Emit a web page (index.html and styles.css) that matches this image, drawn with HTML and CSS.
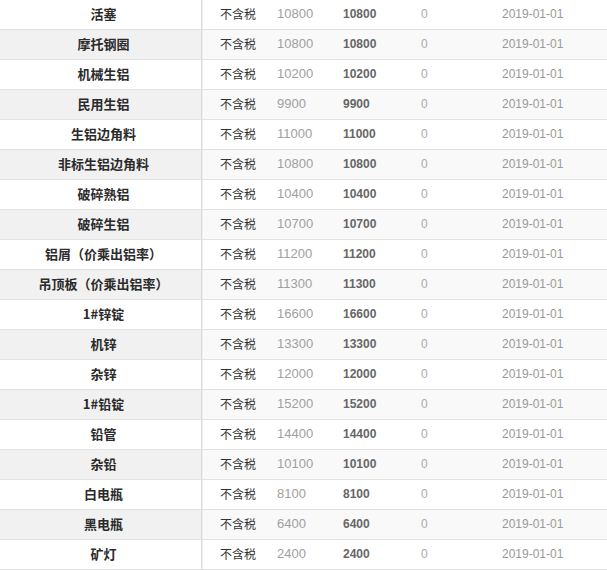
FILE: index.html
```html
<!DOCTYPE html>
<html lang="zh">
<head>
<meta charset="utf-8">
<link rel="stylesheet" href="styles.css">
</head>
<body>
<div class="table">
  <div class="row"><div class="name">活塞</div><div class="tax">不含税</div><div class="old">10800</div><div class="new">10800</div><div class="chg">0</div><div class="date">2019-01-01</div></div>
  <div class="row"><div class="name">摩托钢圈</div><div class="tax">不含税</div><div class="old">10800</div><div class="new">10800</div><div class="chg">0</div><div class="date">2019-01-01</div></div>
  <div class="row"><div class="name">机械生铝</div><div class="tax">不含税</div><div class="old">10200</div><div class="new">10200</div><div class="chg">0</div><div class="date">2019-01-01</div></div>
  <div class="row"><div class="name">民用生铝</div><div class="tax">不含税</div><div class="old">9900</div><div class="new">9900</div><div class="chg">0</div><div class="date">2019-01-01</div></div>
  <div class="row"><div class="name">生铝边角料</div><div class="tax">不含税</div><div class="old">11000</div><div class="new">11000</div><div class="chg">0</div><div class="date">2019-01-01</div></div>
  <div class="row"><div class="name">非标生铝边角料</div><div class="tax">不含税</div><div class="old">10800</div><div class="new">10800</div><div class="chg">0</div><div class="date">2019-01-01</div></div>
  <div class="row"><div class="name">破碎熟铝</div><div class="tax">不含税</div><div class="old">10400</div><div class="new">10400</div><div class="chg">0</div><div class="date">2019-01-01</div></div>
  <div class="row"><div class="name">破碎生铝</div><div class="tax">不含税</div><div class="old">10700</div><div class="new">10700</div><div class="chg">0</div><div class="date">2019-01-01</div></div>
  <div class="row"><div class="name">铝屑（价乘出铝率）</div><div class="tax">不含税</div><div class="old">11200</div><div class="new">11200</div><div class="chg">0</div><div class="date">2019-01-01</div></div>
  <div class="row"><div class="name">吊顶板（价乘出铝率）</div><div class="tax">不含税</div><div class="old">11300</div><div class="new">11300</div><div class="chg">0</div><div class="date">2019-01-01</div></div>
  <div class="row"><div class="name">1#锌锭</div><div class="tax">不含税</div><div class="old">16600</div><div class="new">16600</div><div class="chg">0</div><div class="date">2019-01-01</div></div>
  <div class="row"><div class="name">机锌</div><div class="tax">不含税</div><div class="old">13300</div><div class="new">13300</div><div class="chg">0</div><div class="date">2019-01-01</div></div>
  <div class="row"><div class="name">杂锌</div><div class="tax">不含税</div><div class="old">12000</div><div class="new">12000</div><div class="chg">0</div><div class="date">2019-01-01</div></div>
  <div class="row"><div class="name">1#铅锭</div><div class="tax">不含税</div><div class="old">15200</div><div class="new">15200</div><div class="chg">0</div><div class="date">2019-01-01</div></div>
  <div class="row"><div class="name">铅管</div><div class="tax">不含税</div><div class="old">14400</div><div class="new">14400</div><div class="chg">0</div><div class="date">2019-01-01</div></div>
  <div class="row"><div class="name">杂铅</div><div class="tax">不含税</div><div class="old">10100</div><div class="new">10100</div><div class="chg">0</div><div class="date">2019-01-01</div></div>
  <div class="row"><div class="name">白电瓶</div><div class="tax">不含税</div><div class="old">8100</div><div class="new">8100</div><div class="chg">0</div><div class="date">2019-01-01</div></div>
  <div class="row"><div class="name">黑电瓶</div><div class="tax">不含税</div><div class="old">6400</div><div class="new">6400</div><div class="chg">0</div><div class="date">2019-01-01</div></div>
  <div class="row"><div class="name">矿灯</div><div class="tax">不含税</div><div class="old">2400</div><div class="new">2400</div><div class="chg">0</div><div class="date">2019-01-01</div></div>
</div>
</body>
</html>
```
FILE: styles.css
```css
html, body {
  margin: 0;
  padding: 0;
  background: #fff;
}
body {
  font-family: "Liberation Sans", Arial, "Noto Sans CJK SC", sans-serif;
  font-size: 12px;
  color: #333;
}
.table {
  display: flex;
  flex-direction: column;
  width: 607px;
}
.row {
  display: flex;
  height: 29px;
  border-bottom: 1px solid #e2e2e2;
  align-items: stretch;
}
.row:nth-child(even) {
  background: #f9f9f9;
}
.row > div {
  display: flex;
  align-items: center;
  white-space: nowrap;
  padding-bottom: 2px;
  line-height: 14px;
}
.name {
  width: 195px;
  padding-left: 6px;
  justify-content: center;
  border-right: 1px solid #dadada;
  font-family: "Noto Sans CJK SC", sans-serif;
  font-weight: bold;
  font-size: 13px;
  color: #2b2b2b;
}
.row:nth-child(even) .name {
  background: #f1f1f1;
}
.tax {
  width: 57px;
  padding-left: 17px;
  border-left: 1px solid #f0f0f0;
  font-family: "Noto Sans CJK SC", sans-serif;
  font-size: 12px;
  color: #333;
}
.old {
  width: 66px;
  font-size: 13px;
  color: #a0a0a0;
}
.new {
  width: 78px;
  font-weight: bold;
  color: #666;
}
.chg {
  width: 81px;
  color: #aaa;
}
.date {
  color: #999;
}
```
